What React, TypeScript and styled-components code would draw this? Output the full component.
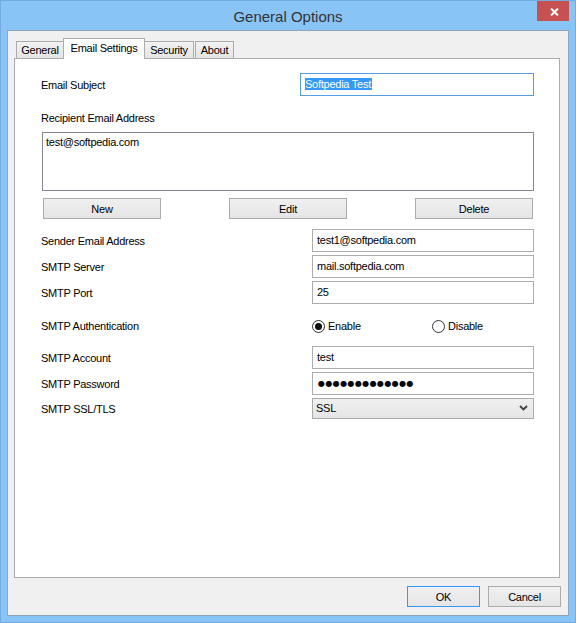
import React from "react";
import styled, { createGlobalStyle, css } from "styled-components";

const Global = createGlobalStyle`
  html, body { margin: 0; padding: 0; background: #89c4f6; }
  #root { width: 576px; height: 623px; }
  * { box-sizing: border-box; }
`;

const font = css`
  font-family: "Liberation Sans", Arial, sans-serif;
  font-size: 11px;
  letter-spacing: -0.25px;
  color: #000;
`;

const Window = styled.div`
  width: 576px;
  height: 623px;
  background: #89c4f6;
  border: 1px solid #74acdf;
  padding: 0 6px 6px 6px;
  display: flex;
  flex-direction: column;
`;

const TitleBar = styled.div`
  height: 29px;
  position: relative;
  display: flex;
  align-items: center;
  justify-content: center;
`;

const Title = styled.div`
  font-family: "Liberation Sans", Arial, sans-serif;
  font-size: 15px;
  color: #333;
  padding-top: 2px;
`;

const CloseButton = styled.div`
  position: absolute;
  top: 0;
  right: 0;
  width: 32px;
  height: 20px;
  background: #c75050;
  display: flex;
  align-items: center;
  justify-content: center;
  padding: 2px 0 0 2px;
`;

const Client = styled.div`
  flex: 1;
  border: 1px solid #8ea4bd;
  background: #f0f0f0;
  display: flex;
  flex-direction: column;
  padding: 7px 8px 8px 6px;
  ${font};
`;

const TabStrip = styled.div`
  display: flex;
  align-items: flex-start;
  height: 21px;
  margin-bottom: -1px;
  padding-left: 2px;
  position: relative;
  z-index: 1;
`;

const Tab = styled.div<{ $w: number; $active?: boolean; $ml?: number }>`
  width: ${(p) => p.$w}px;
  margin-left: ${(p) => p.$ml ?? 0}px;
  border: 1px solid #acacac;
  display: flex;
  align-items: center;
  justify-content: center;
  ${(p) =>
    p.$active
      ? css`
          height: 21px;
          margin-top: 0;
          background: #ffffff;
          border-bottom: none;
          padding-bottom: 2px;
          position: relative;
          z-index: 2;
        `
      : css`
          height: 17px;
          margin-top: 3px;
          background: linear-gradient(#f2f2f2, #e5e5e5);
          border-bottom: none;
        `}
`;

const Panel = styled.div`
  flex: 1;
  border: 1px solid #acacac;
  background: #ffffff;
  padding: 14px 25px 0 27px;
  display: flex;
  flex-direction: column;
`;

const FieldRow = styled.div<{ $labelW: number; $mt?: number; $h?: number }>`
  display: grid;
  grid-template-columns: ${(p) => p.$labelW}px 1fr;
  align-items: center;
  height: ${(p) => p.$h ?? 23}px;
  margin-top: ${(p) => p.$mt ?? 0}px;
`;

const Label = styled.div`
  margin-left: -1px;
  line-height: 14px;
  white-space: nowrap;
`;

const BlockLabel = styled(Label)`
  margin-top: 15px;
  height: 14px;
`;

const boxBase = css`
  ${font};
  height: 100%;
  width: 100%;
  background: #fff;
  border: 1px solid #abadb3;
  padding: 0 4px;
  outline: none;
  margin: 0;
  display: flex;
  align-items: center;
`;

const TextBox = styled.input`
  ${boxBase};
  padding-bottom: 1px;
`;

const FocusedBox = styled.div`
  ${boxBase};
  border-color: #569de5;
  padding-left: 4px;
  padding-bottom: 1px;
`;

const Selected = styled.span`
  background: #3399ff;
  color: #fff;
  line-height: 12px;
  padding-right: 1px;
`;

const Dots = styled.input`
  ${boxBase};
  font-family: "DejaVu Sans", sans-serif;
  font-size: 8px;
  letter-spacing: 0.4px;
  padding-left: 5px;
  padding-bottom: 1px;
`;

const TextArea = styled.div`
  height: 59px;
  margin-top: 7px;
  border: 1px solid #828790;
  padding: 3px 3px;
  line-height: 13px;
  background: #fff;
`;

const ButtonRow = styled.div`
  display: flex;
  justify-content: space-between;
  padding: 0 1px;
  margin-top: 7px;
  margin-bottom: 10px;
`;

const Button = styled.div<{ $w: number; $default?: boolean }>`
  width: ${(p) => p.$w}px;
  height: 21px;
  border: 1px solid ${(p) => (p.$default ? "#3399ff" : "#acacac")};
  background: linear-gradient(#f0f0f0, #e5e5e5);
  display: flex;
  align-items: center;
  justify-content: center;
  padding-top: 1px;
`;

const Fields = styled.div<{ $mt?: number }>`
  display: flex;
  flex-direction: column;
  gap: 3px;
  margin-top: ${(p) => p.$mt ?? 0}px;
`;

const RadioGroup = styled.div`
  display: flex;
  align-items: center;
`;

const RadioOption = styled.div`
  width: 120px;
  display: flex;
  align-items: center;
  gap: 3px;
`;

const RadioCircle = styled.div<{ $checked?: boolean }>`
  width: 13px;
  height: 13px;
  border-radius: 50%;
  border: 1px solid #333;
  background: #fff;
  display: flex;
  align-items: center;
  justify-content: center;
  &::after {
    content: "";
    display: ${(p) => (p.$checked ? "block" : "none")};
    width: 7px;
    height: 7px;
    border-radius: 50%;
    background: #111;
  }
`;

const SelectBox = styled.div`
  height: 21px;
  border: 1px solid #acacac;
  background: linear-gradient(#f0f0f0, #e5e5e5);
  display: flex;
  align-items: center;
  justify-content: space-between;
  padding: 0 5px 1px 3px;
`;

const Footer = styled.div`
  display: flex;
  justify-content: flex-end;
  gap: 8px;
  margin-top: 8px;
  margin-right: -1px;
`;

export default function App() {
  return (
    <>
      <Global />
      <Window>
        <TitleBar>
          <Title>General Options</Title>
          <CloseButton>
            <svg width="9" height="8" viewBox="0 0 9 8">
              <path d="M1 0.5 L8 7.5 M8 0.5 L1 7.5" stroke="#fff" strokeWidth="2" />
            </svg>
          </CloseButton>
        </TitleBar>
        <Client>
          <TabStrip>
            <Tab $w={48}>General</Tab>
            <Tab $w={82} $ml={-1} $active>
              Email Settings
            </Tab>
            <Tab $w={50} $ml={-1}>Security</Tab>
            <Tab $w={39} $ml={1}>About</Tab>
          </TabStrip>
          <Panel>
            <FieldRow $labelW={258}>
              <Label>Email Subject</Label>
              <FocusedBox>
                <Selected>Softpedia Test</Selected>
              </FocusedBox>
            </FieldRow>
            <BlockLabel>Recipient Email Address</BlockLabel>
            <TextArea>test@softpedia.com</TextArea>
            <ButtonRow>
              <Button $w={118}>New</Button>
              <Button $w={118}>Edit</Button>
              <Button $w={118}>Delete</Button>
            </ButtonRow>
            <Fields>
              <FieldRow $labelW={270}>
                <Label>Sender Email Address</Label>
                <TextBox readOnly defaultValue="test1@softpedia.com" />
              </FieldRow>
              <FieldRow $labelW={270}>
                <Label>SMTP Server</Label>
                <TextBox readOnly defaultValue="mail.softpedia.com" />
              </FieldRow>
              <FieldRow $labelW={270}>
                <Label>SMTP Port</Label>
                <TextBox readOnly defaultValue="25" />
              </FieldRow>
            </Fields>
            <FieldRow $labelW={270} $h={16} $mt={14}>
              <Label>SMTP Authentication</Label>
              <RadioGroup>
                <RadioOption>
                  <RadioCircle $checked />
                  <span>Enable</span>
                </RadioOption>
                <RadioOption>
                  <RadioCircle />
                  <span>Disable</span>
                </RadioOption>
              </RadioGroup>
            </FieldRow>
            <Fields $mt={12}>
              <FieldRow $labelW={270}>
                <Label>SMTP Account</Label>
                <TextBox readOnly defaultValue="test" />
              </FieldRow>
              <FieldRow $labelW={270}>
                <Label>SMTP Password</Label>
                <Dots readOnly defaultValue="●●●●●●●●●●●●●" />
              </FieldRow>
              <FieldRow $labelW={270} $h={21}>
                <Label>SMTP SSL/TLS</Label>
                <SelectBox>
                  <span>SSL</span>
                  <svg width="9" height="6" viewBox="0 0 9 6">
                    <polyline points="1,1 4.5,4.5 8,1" fill="none" stroke="#404040" strokeWidth="1.8" />
                  </svg>
                </SelectBox>
              </FieldRow>
            </Fields>
          </Panel>
          <Footer>
            <Button $w={73} $default>OK</Button>
            <Button $w={73}>Cancel</Button>
          </Footer>
        </Client>
      </Window>
    </>
  );
}
